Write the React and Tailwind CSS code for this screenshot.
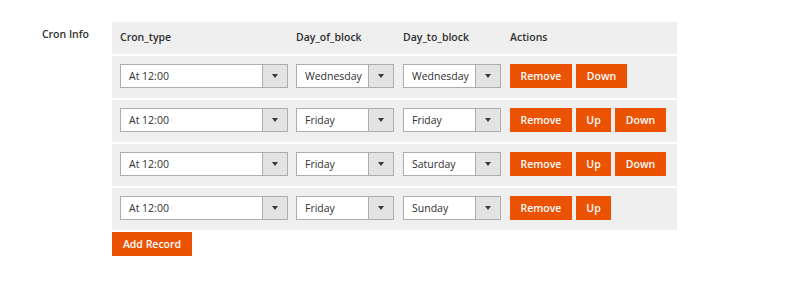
import React from "react"

const rows = [
  { cron: "At 12:00", from: "Wednesday", to: "Wednesday", up: false, down: true },
  { cron: "At 12:00", from: "Friday", to: "Friday", up: true, down: true },
  { cron: "At 12:00", from: "Friday", to: "Saturday", up: true, down: true },
  { cron: "At 12:00", from: "Friday", to: "Sunday", up: true, down: false },
]

function Select({ value, width }) {
  return (
    <div className={`flex h-[24px] ${width} border border-[#adadad] bg-white`}>
      <div className="flex-1 pl-[8px] text-[10.5px] leading-[22px] text-[#303030]">{value}</div>
      <div className="flex w-[25px] items-center justify-center border-l border-[#adadad] bg-[#e3e3e3]">
        <svg width="6" height="4" viewBox="0 0 6 4">
          <path d="M0 0h6L3 4z" fill="#41362f" />
        </svg>
      </div>
    </div>
  )
}

function OrangeButton({ children, className = "" }) {
  return (
    <button className={`h-[24px] border border-[#eb5202] bg-[#eb5202] text-center text-[10.5px] font-semibold leading-[22px] text-white ${className}`}>
      {children}
    </button>
  )
}

export default function App() {
  return (
    <div className="flex h-[290px] w-[786px] bg-white pt-[22px] font-['Open_Sans',sans-serif]">
      <div className="w-[112px] pr-[23px] pt-[5px] text-right text-[10.5px] font-semibold text-[#303030]">Cron Info</div>
      <div>
        <div className="w-[565px] bg-[#efefef]">
          {/* header */}
          <div className="flex h-[32px] items-center text-[10.5px] font-semibold text-[#303030]">
            <div className="w-[176px] pl-2">Cron_type</div>
            <div className="w-[107px] pl-2">Day_of_block</div>
            <div className="w-[107px] pl-2">Day_to_block</div>
            <div className="pl-2">Actions</div>
          </div>
          {rows.map((r, i) => (
            <div key={i} className="flex h-[44px] items-start border-t-2 border-white pt-[8px]">
              <div className="w-[176px] pl-2">
                <Select value={r.cron} width="w-[168px]" />
              </div>
              <div className="w-[107px] pl-2">
                <Select value={r.from} width="w-[98px]" />
              </div>
              <div className="w-[107px] pl-2">
                <Select value={r.to} width="w-[98px]" />
              </div>
              <div className="flex gap-[4px] pl-2">
                <OrangeButton className="w-[62px]">Remove</OrangeButton>
                {r.up && <OrangeButton className="w-[35px]">Up</OrangeButton>}
                {r.down && <OrangeButton className="w-[51px]">Down</OrangeButton>}
              </div>
            </div>
          ))}
        </div>
        <OrangeButton className="h-[23px] w-[80px] leading-[21px]">Add Record</OrangeButton>
      </div>
    </div>
  )
}
